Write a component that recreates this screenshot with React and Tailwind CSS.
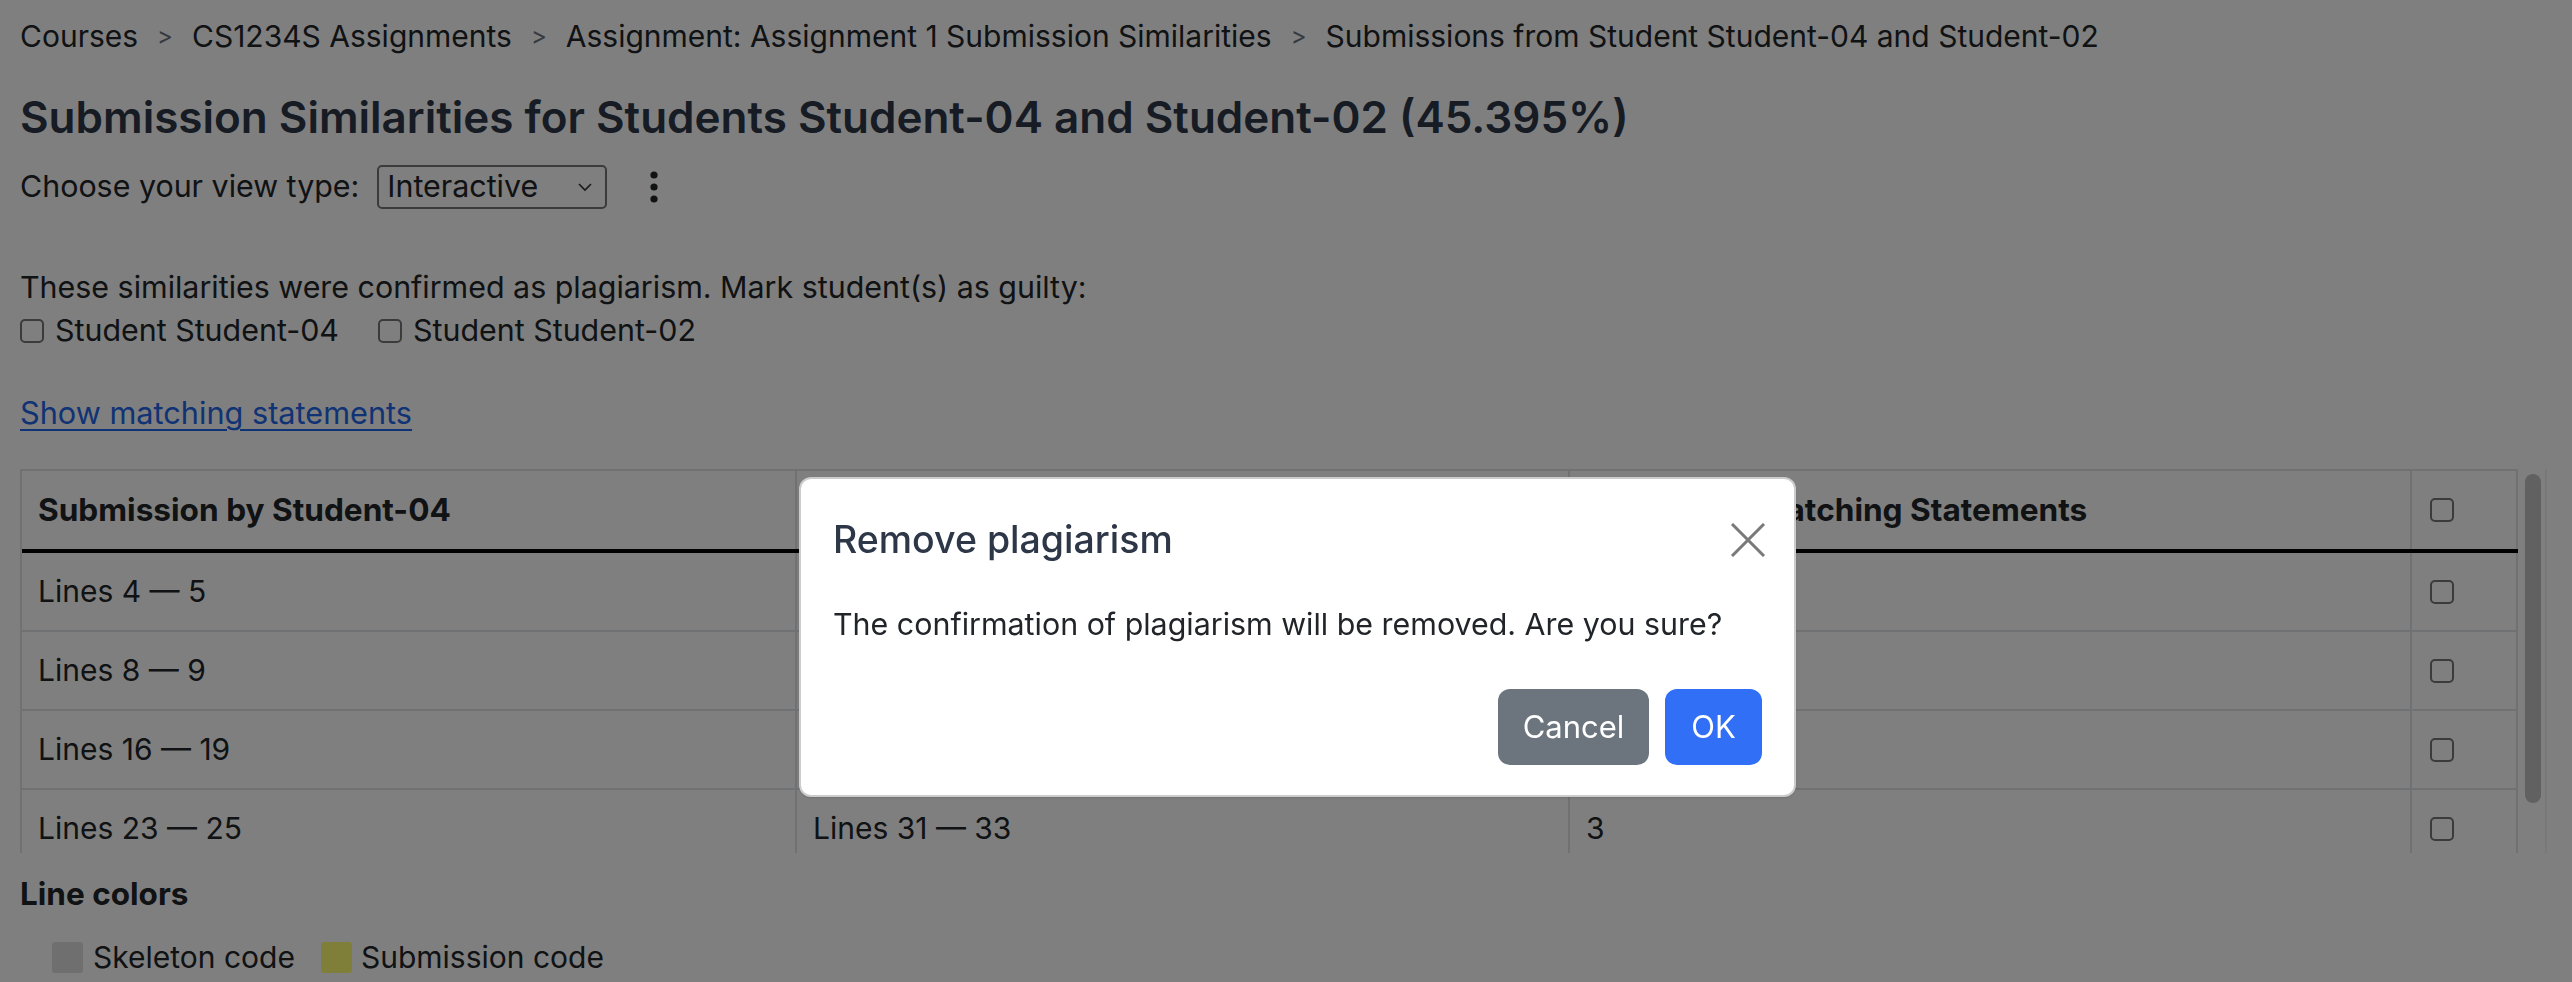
import React from "react";

const F = { fontFamily: "Inter, 'Noto Sans', sans-serif" };

function Box({ className = "" }) {
  return <div className={"w-[24px] h-[24px] rounded-[5px] border-2 border-[#767676] bg-white shrink-0 " + className} />;
}

const rows = [
  ["Lines 4 — 5", "Lines 10 — 11", "2"],
  ["Lines 8 — 9", "Lines 14 — 15", "2"],
  ["Lines 16 — 19", "Lines 22 — 25", "4"],
  ["Lines 23 — 25", "Lines 31 — 33", "3"],
];

function Sep() {
  return <span className="mx-[19px] text-[#6c757d] text-[24px]">&gt;</span>;
}

export default function App() {
  return (
    <div style={F} className="relative w-[2572px] h-[982px] overflow-hidden bg-white text-[#212529]">
      <div className="pl-[20px]">
        {/* breadcrumb */}
        <div className="pt-[12px] h-[60px] flex items-center text-[30px] leading-[48px] text-[#212529]">
          <span>Courses</span>
          <Sep />
          <span>CS1234S Assignments</span>
          <Sep />
          <span>Assignment: Assignment 1 Submission Similarities</span>
          <Sep />
          <span>Submissions from Student Student-04 and Student-02</span>
        </div>
        {/* title */}
        <h1 className="mt-[30px] text-[44px] leading-[54px] font-semibold text-[#2d3748]">
          Submission Similarities for Students Student-04 and Student-02 (45.395%)
        </h1>
        {/* view type */}
        <div className="mt-[21px] h-[44px] flex items-center text-[30.4px]">
          <span>Choose your view type:</span>
          <div className="ml-[18px] w-[230px] h-[44px] border-2 border-[#767676] rounded-[5px] bg-white flex items-center pl-[8px] pr-[12px]">
            <span className="flex-1">Interactive</span>
            <svg width="16" height="10" viewBox="0 0 16 10">
              <path d="M2 2 L8 8 L14 2" stroke="#333" strokeWidth="1.6" fill="none" />
            </svg>
          </div>
          <svg className="ml-[42px]" width="10" height="32" viewBox="0 0 10 32">
            <circle cx="5" cy="4" r="3.6" fill="#212529" />
            <circle cx="5" cy="16" r="3.6" fill="#212529" />
            <circle cx="5" cy="28" r="3.6" fill="#212529" />
          </svg>
        </div>
        {/* plagiarism confirm */}
        <div className="mt-[57px] text-[30.4px] leading-[43px]">
          These similarities were confirmed as plagiarism. Mark student(s) as guilty:
        </div>
        <div className="h-[44px] flex items-center text-[30.4px]">
          <Box />
          <span className="ml-[11px]">Student Student-04</span>
          <Box className="ml-[39px]" />
          <span className="ml-[11px]">Student Student-02</span>
        </div>
        <div className="mt-[36px] h-[48px] flex items-center text-[30.7px]">
          <a className="text-[#1f66e8] underline underline-offset-[5px] decoration-2">Show matching statements</a>
        </div>
        {/* table */}
        <div className="mt-[32px] h-[384px] flex overflow-hidden">
          <div className="w-[2498px] shrink-0 border-l-2 border-t-2 border-[#dee2e6] text-[30px]">
            <div className="grid grid-cols-[775px_773px_842px_106px] h-[82px] border-b-4 border-black font-bold text-[31.6px]">
              <div className="border-r-2 border-[#dee2e6] pl-[16px] flex items-center">Submission by Student-04</div>
              <div className="border-r-2 border-[#dee2e6] pl-[16px] flex items-center">Submission by Student-02</div>
              <div className="border-r-2 border-[#dee2e6] pl-[16px] flex items-center">Number of Matching Statements</div>
              <div className="border-r-2 border-[#dee2e6] pl-[18px] flex items-center"><Box /></div>
            </div>
            {rows.map((r, i) => (
              <div key={i} className="grid grid-cols-[775px_773px_842px_106px] h-[79px] border-b-2 border-[#dee2e6]">
                <div className="border-r-2 border-[#dee2e6] pl-[16px] flex items-center">{r[0]}</div>
                <div className="border-r-2 border-[#dee2e6] pl-[16px] flex items-center">{r[1]}</div>
                <div className="border-r-2 border-[#dee2e6] pl-[16px] flex items-center">{r[2]}</div>
                <div className="border-r-2 border-[#dee2e6] pl-[18px] flex items-center"><Box /></div>
              </div>
            ))}
          </div>
          <div className="w-[29px] shrink-0 border-r-2 border-[#f0f0f0] pl-[7px] pt-[5px]">
            <div className="w-[16px] h-[329px] rounded-full bg-[#c2c2c2]" />
          </div>
        </div>
        {/* legend */}
        <div className="mt-[17px] h-[48px] flex items-center text-[31.5px] font-bold">Line colors</div>
        <div className="mt-[15px] h-[48px] flex items-center text-[30px] pl-[32px]">
          <div className="w-[31px] h-[31px] rounded-[3px] bg-[#dedede]" />
          <span className="ml-[10px]">Skeleton code</span>
          <div className="ml-[26px] w-[31px] h-[31px] rounded-[3px] bg-[#ffff74]" />
          <span className="ml-[9px]">Submission code</span>
        </div>
      </div>

      {/* backdrop */}
      <div className="fixed inset-0 bg-black/50" />

      {/* modal */}
      <div className="fixed left-[799px] top-[477px] w-[997px] h-[320px] bg-white rounded-[12px] border-2 border-black/20 shadow-sm px-[32px]">
        <div className="pt-[31px] h-[91px] flex items-center justify-between">
          <div className="text-[37.5px] leading-[60px] font-medium text-[#2d3748]">Remove plagiarism</div>
          <svg className="mr-[-4px]" width="36" height="34" viewBox="0 0 36 34">
            <path d="M2 1 L34 33 M34 1 L2 33" stroke="#7a7a7a" strokeWidth="3" fill="none" />
          </svg>
        </div>
        <div className="mt-[31px] h-[48px] flex items-center text-[30.4px] text-[#212529]">
          The confirmation of plagiarism will be removed. Are you sure?
        </div>
        <div className="mt-[40px] flex justify-end gap-[16px] text-[31px] text-white">
          <div className="w-[151px] h-[76px] rounded-[12px] bg-[#6c757d] flex items-center justify-center">Cancel</div>
          <div className="w-[97px] h-[76px] rounded-[12px] bg-[#316ff6] flex items-center justify-center">OK</div>
        </div>
      </div>
    </div>
  );
}
